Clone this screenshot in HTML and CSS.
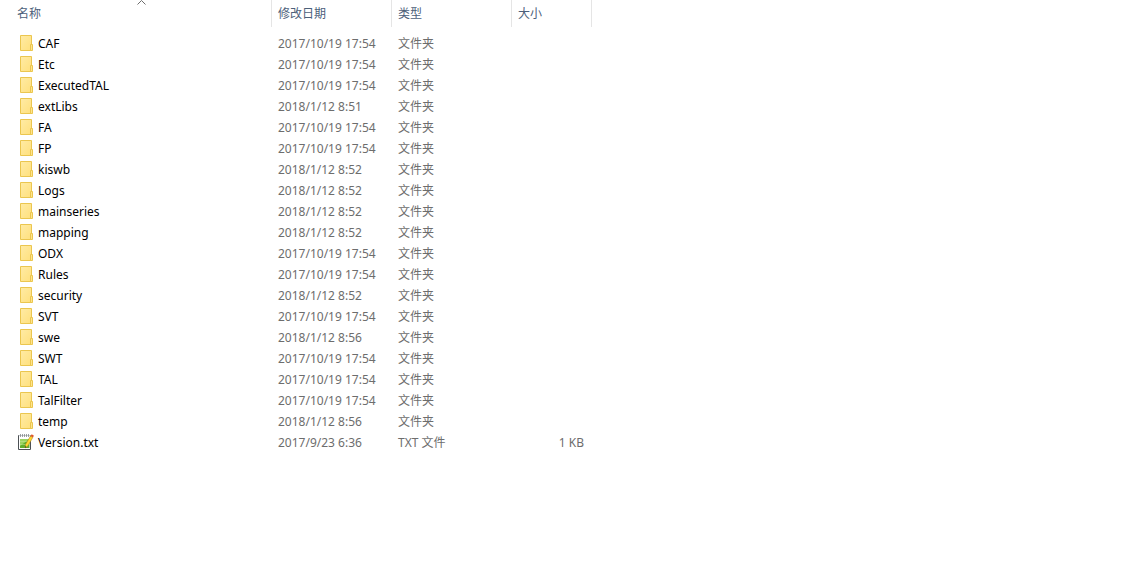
FILE: index.html
```html
<!DOCTYPE html>
<html lang="zh-CN">
<head>
<meta charset="utf-8">
<title>文件列表</title>
<link rel="stylesheet" href="styles.css">
</head>
<body>
<svg class="defs" aria-hidden="true">
  <defs>
    <linearGradient id="paper" x1="0" y1="0" x2="1" y2="1">
      <stop offset="0" stop-color="#ffeba5"/>
      <stop offset="1" stop-color="#ffe07d"/>
    </linearGradient>
    <symbol id="folder" viewBox="0 0 16 16">
      <path d="M2.500 .5h11v15h-11z" fill="url(#paper)" stroke="#ebc64f"/>
      <path d="M12.500 15.500v-6h2v6z" fill="#ffe48c" stroke="#ebc64f"/>
    </symbol>
    <symbol id="note" viewBox="0 0 16 16">
      <path d="M.5 1.500h12v14H.5z" fill="#fff" stroke="#4c5054"/>
      <path d="M1 1.500h11.500" stroke="#c9cccf"/>
      <path d="M2.500 0v3M4.500 0v3M6.500 0v3M8.500 0v3M10.500 0v3" stroke="#83888c" stroke-width=".8"/>
      <path d="M2 5h9.500v9H2z" fill="#5fae2c"/>
      <path d="M2 5h9.500L2 12z" fill="#9bd460"/>
      <path d="M2 7.500h9.500M2 10.500h9.500" stroke="#c3e69c" stroke-width=".5"/>
      <path d="M7.500 10.500l5-8.500 2.300 1.500-5 8.500-2.800 2z" fill="#ffd531" stroke="#a77c12" stroke-width=".5"/>
      <path d="M12.500 2l1.200-1.700 2.300 1.500-1.200 1.700z" fill="#e0592b"/>
      <path d="M7 14l.3-2 1.200.9z" fill="#333"/>
    </symbol>
  </defs>
</svg>
<main class="explorer">
<table class="files">
  <colgroup><col class="col-name"><col class="col-date"><col class="col-type"><col class="col-size"></colgroup>
  <thead>
    <tr>
      <th aria-sort="ascending"><button type="button" class="head head-name">名称<svg class="sort" viewBox="0 0 9 5" aria-hidden="true"><path d="M.5 4.500l4-4 4 4"/></svg></button></th>
      <th><button type="button" class="head">修改日期</button></th>
      <th><button type="button" class="head">类型</button></th>
      <th><button type="button" class="head">大小</button></th>
    </tr>
  </thead>
  <tbody>
    <tr><td class="name"><svg class="icon"><use href="#folder"/></svg>CAF</td><td>2017/10/19 17:54</td><td>文件夹</td><td></td></tr>
    <tr><td class="name"><svg class="icon"><use href="#folder"/></svg>Etc</td><td>2017/10/19 17:54</td><td>文件夹</td><td></td></tr>
    <tr><td class="name"><svg class="icon"><use href="#folder"/></svg>ExecutedTAL</td><td>2017/10/19 17:54</td><td>文件夹</td><td></td></tr>
    <tr><td class="name"><svg class="icon"><use href="#folder"/></svg>extLibs</td><td>2018/1/12 8:51</td><td>文件夹</td><td></td></tr>
    <tr><td class="name"><svg class="icon"><use href="#folder"/></svg>FA</td><td>2017/10/19 17:54</td><td>文件夹</td><td></td></tr>
    <tr><td class="name"><svg class="icon"><use href="#folder"/></svg>FP</td><td>2017/10/19 17:54</td><td>文件夹</td><td></td></tr>
    <tr><td class="name"><svg class="icon"><use href="#folder"/></svg>kiswb</td><td>2018/1/12 8:52</td><td>文件夹</td><td></td></tr>
    <tr><td class="name"><svg class="icon"><use href="#folder"/></svg>Logs</td><td>2018/1/12 8:52</td><td>文件夹</td><td></td></tr>
    <tr><td class="name"><svg class="icon"><use href="#folder"/></svg>mainseries</td><td>2018/1/12 8:52</td><td>文件夹</td><td></td></tr>
    <tr><td class="name"><svg class="icon"><use href="#folder"/></svg>mapping</td><td>2018/1/12 8:52</td><td>文件夹</td><td></td></tr>
    <tr><td class="name"><svg class="icon"><use href="#folder"/></svg>ODX</td><td>2017/10/19 17:54</td><td>文件夹</td><td></td></tr>
    <tr><td class="name"><svg class="icon"><use href="#folder"/></svg>Rules</td><td>2017/10/19 17:54</td><td>文件夹</td><td></td></tr>
    <tr><td class="name"><svg class="icon"><use href="#folder"/></svg>security</td><td>2018/1/12 8:52</td><td>文件夹</td><td></td></tr>
    <tr><td class="name"><svg class="icon"><use href="#folder"/></svg>SVT</td><td>2017/10/19 17:54</td><td>文件夹</td><td></td></tr>
    <tr><td class="name"><svg class="icon"><use href="#folder"/></svg>swe</td><td>2018/1/12 8:56</td><td>文件夹</td><td></td></tr>
    <tr><td class="name"><svg class="icon"><use href="#folder"/></svg>SWT</td><td>2017/10/19 17:54</td><td>文件夹</td><td></td></tr>
    <tr><td class="name"><svg class="icon"><use href="#folder"/></svg>TAL</td><td>2017/10/19 17:54</td><td>文件夹</td><td></td></tr>
    <tr><td class="name"><svg class="icon"><use href="#folder"/></svg>TalFilter</td><td>2017/10/19 17:54</td><td>文件夹</td><td></td></tr>
    <tr><td class="name"><svg class="icon"><use href="#folder"/></svg>temp</td><td>2018/1/12 8:56</td><td>文件夹</td><td></td></tr>
    <tr><td class="name"><svg class="icon"><use href="#note"/></svg>Version.txt</td><td>2017/9/23 6:36</td><td>TXT 文件</td><td class="size">1 KB</td></tr>
  </tbody>
</table>
</main>
</body>
</html>
```

FILE: styles.css
```css
body {
  margin: 0;
  background: #fff;
  color: #6d6d6d;
  font: 12px/21px "Noto Sans", "Noto Sans CJK SC", sans-serif;
}

.defs {
  position: absolute;
  width: 0;
  height: 0;
}

.explorer {
  padding-left: 12px;
}

.files {
  table-layout: fixed;
  width: 580px;
  border-collapse: separate;
  border-spacing: 0;
}

.col-name { width: 260px; }
.col-date,
.col-type { width: 120px; }
.col-size { width: 80px; }

.files th {
  padding: 0;
  border-right: 1px solid #e5e5e5;
  font-weight: 400;
}

.head {
  display: block;
  position: relative;
  width: 100%;
  height: 27px;
  padding: 0 6px;
  border: 0;
  background: none;
  color: #4c607a;
  font: inherit;
  text-align: left;
}

.head-name {
  padding-left: 5px;
}

.sort {
  position: absolute;
  top: 0;
  left: 50%;
  width: 9px;
  height: 5px;
  margin-left: -5px;
  fill: none;
  stroke: #6d6d6d;
}

/* Gap between the header and the first row */
.files tbody::before {
  content: "";
  display: block;
  height: 6px;
}

.files td {
  height: 21px;
  padding: 0 8px 0 6px;
  white-space: nowrap;
}

.files .name {
  color: #000;
}

.icon {
  width: 16px;
  height: 16px;
  margin-right: 4px;
  overflow: visible;
  vertical-align: -3px;
}

.files .size {
  text-align: right;
}
```
